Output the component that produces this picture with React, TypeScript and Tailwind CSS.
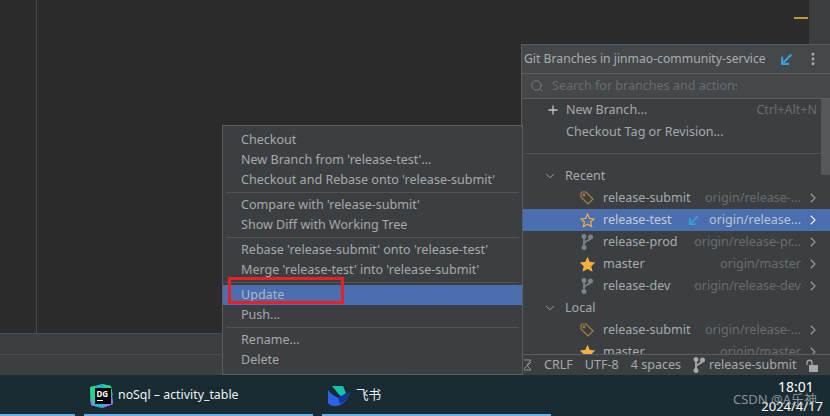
import { ChevronDown, ChevronRight, MoreVertical, Plus, Search } from 'lucide-react'

const font = "font-['Noto_Sans','Noto_Sans_CJK_SC',sans-serif]"

function TagIcon() {
    return (
        <svg width="14" height="14" viewBox="0 0 14 14" fill="none" stroke="#a9803e" strokeWidth="1.2">
            <path d="M1 2.5 Q1 1 2.5 1 H6 L13 8 L8 13 L1 6 Z" />
            <circle cx="4" cy="4" r="0.8" />
        </svg>
    )
}

function StarIcon({ filled }: { filled?: boolean }) {
    return (
        <svg width="15" height="15" viewBox="0 0 15 15" fill={filled ? '#f4af3d' : 'none'} stroke="#f4af3d" strokeWidth="1.2">
            <path d="M7.5 1.2 L9.4 5.4 L14 5.9 L10.6 9 L11.6 13.6 L7.5 11.2 L3.4 13.6 L4.4 9 L1 5.9 L5.6 5.4 Z" />
        </svg>
    )
}

function BranchIcon({ color = '#7d8487' }: { color?: string }) {
    return (
        <svg width="12" height="16" viewBox="0 0 12 16" fill="none" stroke={color} strokeWidth="1.8">
            <path d="M3 3 V13" />
            <path d="M9.5 3.5 C9.5 7 3 6.5 3 10" />
            <circle cx="3" cy="2.5" r="1.6" fill={color} />
            <circle cx="9.5" cy="3" r="1.6" fill={color} />
            <circle cx="3" cy="13.5" r="1.6" fill={color} />
        </svg>
    )
}

function InArrow({ size = 12 }: { size?: number }) {
    return (
        <svg width={size} height={size} viewBox="0 0 12 12" fill="none" stroke="#389fd6" strokeWidth="2">
            <path d="M10.5 1.5 L3 9" />
            <path d="M2 3.5 V10 H8.5" />
        </svg>
    )
}

function LockIcon() {
    return (
        <svg width="12" height="13" viewBox="0 0 12 13" fill="none">
            <rect x="3" y="6" width="9" height="7" fill="#a5a9ac" />
            <path d="M1 6 V3.5 C1 0.5 6 0.5 6 3.5 V6" stroke="#a5a9ac" strokeWidth="1.3" />
        </svg>
    )
}

function ClippedStatusIcon() {
    return (
        <svg width="8" height="14" viewBox="0 0 8 14" fill="none" stroke="#8f9396" strokeWidth="1">
            <path d="M0 2 H7 L3 7 L7 12 H0" />
            <path d="M0 11 L7 4" />
        </svg>
    )
}

function DataGripLogo() {
    return (
        <svg width="25" height="24" viewBox="0 0 25 24">
            <path d="M1 3 L13 0 L22 2 L24 20 L13 24 L2 21 Z" fill="#20b8c8" />
            <path d="M1 3 L7 2 L5 21 L2 21 Z" fill="#21d789" />
            <path d="M13 0 L22 2 L24 12 L17 4 Z" fill="#21d789" />
            <path d="M13 24 L24 20 L23 12 L16 20 Z" fill="#9775f8" />
            <path d="M1 13 L5 21 L12 24 L2 21 Z" fill="#9775f8" />
            <rect x="6" y="4" width="16" height="16" fill="#000" />
            <text x="7.5" y="12.5" fontSize="8" fontWeight="700" fill="#fff" fontFamily="Noto Sans">DG</text>
            <rect x="8" y="16" width="6" height="1" fill="#fff" />
        </svg>
    )
}

function FeishuLogo() {
    return (
        <svg width="22" height="20" viewBox="0 0 22 20">
            <path d="M4 0 H15 L18 7 L13 11 Z" fill="#12c4ab" />
            <path d="M0 4 C4 9 9 12 14 13 L22 6 C19 14 15 20 7 20 C3 20 1 18 0 17 Z" fill="#2c62e8" />
            <path d="M10 11 L22 6 C19 14 15 17 12 18 Z" fill="#14359b" />
        </svg>
    )
}

const Sep = () => <div className="h-[1px] bg-[#515355] mx-[3px] my-[2px]" />

function MenuItem({ label, active }: { label: string; active?: boolean }) {
    return (
        <div className={`h-[20px] leading-[20px] pl-[18px] ${active ? 'bg-[#4b6eaf] text-[#a9b7c6]' : 'text-[#a5a9ac]'}`}>
            {label}
        </div>
    )
}

function BranchRow({ icon, name, remote, active, incoming }: {
    icon: React.ReactNode
    name: string
    remote: string
    active?: boolean
    incoming?: boolean
}) {
    return (
        <div className={`h-[22px] flex items-center pl-[54px] pr-[9px] shrink-0 whitespace-nowrap ${active ? 'bg-[#4b6eaf]' : ''}`}>
            <div className="w-[22px] flex justify-center mr-[5px]">{icon}</div>
            <span className={active ? 'text-[#c3ccd6]' : 'text-[#a5a9ac]'}>{name}</span>
            {incoming && <span className="ml-[16px]"><InArrow size={11} /></span>}
            <span className={`ml-auto ${active ? 'text-[#b9c4d2]' : 'text-[#686c6f]'}`}>{remote}</span>
            <ChevronRight size={16} strokeWidth={1.6} className={`ml-[4px] ${active ? 'text-[#eef1f5]' : 'text-[#9a9da0]'}`} />
        </div>
    )
}

function GroupRow({ label }: { label: string }) {
    return (
        <div className="h-[22px] flex items-center pl-[21px] shrink-0 text-[#a5a9ac]">
            <ChevronDown size={14} strokeWidth={1.5} className="mr-[8px]" />
            {label}
        </div>
    )
}

export default function App() {
    return (
        <div className={`relative w-[830px] h-[416px] overflow-hidden flex flex-col bg-[#2b2b2b] text-[12.55px] ${font}`}>
            {/* editor */}
            <div className="h-[333px] flex shrink-0">
                <div className="w-[37px] border-r border-[#4a4c4e]" />
                <div className="flex-1 bg-[#2b2b2b]" />
                <div className="w-[21px] bg-[#3c3f41]" />
            </div>
            <div className="absolute left-[794px] top-[17px] w-[14px] h-[2px] bg-[#c4952a]" />
            {/* tool window bars */}
            <div className="h-[22px] bg-[#3c3f41] border-t border-[#4a4d4f] border-b shrink-0" />
            <div className="h-[20px] bg-[#3c3f41] shrink-0" />
            {/* taskbar */}
            <div className="flex-1 relative flex items-center bg-gradient-to-r from-[#1a2a33] to-[#1b2b33] text-white">
                <div className="ml-[89px] flex items-center gap-[4px] w-[233px]">
                    <DataGripLogo />
                    <span className="text-[12.35px] text-[#eef0f2]">noSql – activity_table</span>
                </div>
                <div className="ml-[6px] flex items-center gap-[6px]">
                    <FeishuLogo />
                    <span className="text-[#eef0f2]">飞书</span>
                </div>
                <div className="absolute left-0 right-0 bottom-0 h-[2px] flex">
                    <div className="w-[75px] bg-[#63b0e8]" />
                    <div className="ml-[9px] w-[229px] bg-[#63b0e8]" />
                    <div className="ml-[9px] w-[229px] bg-[#63b0e8]" />
                </div>
                <div className="absolute right-[4px] top-[3px] w-[60px] text-center text-[14px] leading-[18px]">18:01</div>
                <div className="absolute right-[7px] top-[22px] text-[13px] leading-[18px]">2024/4/17</div>
                <div className="absolute left-[733px] top-[15px] text-[13px] leading-[18px] text-[#a8adb0]/80">CSDN @A乐神</div>
            </div>

            {/* branches popup */}
            <div className="absolute left-[521px] top-[44px] w-[309px] h-[331px] flex flex-col bg-[#3c3f41] border-l border-t border-[#5b5d5f]">
                <div className="h-[29px] shrink-0 flex items-center pl-[2px] bg-[#45484a] border-b border-[#5b5d5f] text-[12.2px] text-[#a9adb0] whitespace-nowrap">
                    <span className="w-[241px]">Git Branches in jinmao-community-service</span>
                    <span className="ml-[15px]"><InArrow size={13} /></span>
                    <MoreVertical size={16} strokeWidth={2.4} className="ml-[12px] text-[#a9adb0]" />
                </div>
                <div className="h-[25px] shrink-0 flex items-center pl-[8px] bg-[#45484a] border-b border-[#5b5d5f] text-[#686c6f]">
                    <Search size={14} strokeWidth={1.5} className="text-[#7f8386]" />
                    <span className="ml-[8px] w-[185px] overflow-hidden whitespace-nowrap">Search for branches and actions</span>
                </div>
                <div className="relative flex-1 flex flex-col overflow-hidden">
                    <div className="absolute right-0 top-0 w-[9px] h-[76px] bg-[#55585a]" />
                    <div className="h-[22px] flex items-center pl-[24px] shrink-0 text-[#a5a9ac]">
                        <Plus size={14} strokeWidth={2.2} className="mr-[6px] text-[#c5c8ca]" />
                        New Branch...
                        <span className="ml-auto mr-[13px] text-[#686c6f]">Ctrl+Alt+N</span>
                    </div>
                    <div className="h-[22px] flex items-center pl-[44px] shrink-0 text-[#a5a9ac]">Checkout Tag or Revision...</div>
                    <div className="h-[1px] mt-[10px] mb-[11px] mx-[3px] bg-[#515355] shrink-0" />
                    <GroupRow label="Recent" />
                    <BranchRow icon={<TagIcon />} name="release-submit" remote="origin/release-..." />
                    <BranchRow icon={<StarIcon />} name="release-test" remote="origin/release..." active incoming />
                    <BranchRow icon={<BranchIcon />} name="release-prod" remote="origin/release-pr..." />
                    <BranchRow icon={<StarIcon filled />} name="master" remote="origin/master" />
                    <BranchRow icon={<BranchIcon />} name="release-dev" remote="origin/release-dev" />
                    <GroupRow label="Local" />
                    <BranchRow icon={<TagIcon />} name="release-submit" remote="origin/release-..." />
                    <BranchRow icon={<StarIcon filled />} name="master" remote="origin/master" />
                </div>
                <div className="h-[21px] shrink-0 flex items-center bg-[#3c3f41] border-t border-[#5b5d5f] text-[#a5a9ac] pl-[2px] gap-[12px] whitespace-nowrap">
                    <ClippedStatusIcon />
                    <span>CRLF</span>
                    <span>UTF-8</span>
                    <span>4 spaces</span>
                    <span className="flex items-center gap-[4px]"><BranchIcon color="#a5a9ac" />release-submit</span>
                    <span className="-ml-[3px]"><LockIcon /></span>
                </div>
            </div>

            {/* context menu, sits over the popup's left edge */}
            <div className="absolute left-[222px] top-[125px] w-[301px] h-[250px] bg-[#3c3f41] border border-[#5b5d5f] pt-[4px]">
                <MenuItem label="Checkout" />
                <MenuItem label="New Branch from 'release-test'..." />
                <MenuItem label="Checkout and Rebase onto 'release-submit'" />
                <Sep />
                <MenuItem label="Compare with 'release-submit'" />
                <MenuItem label="Show Diff with Working Tree" />
                <Sep />
                <MenuItem label="Rebase 'release-submit' onto 'release-test'" />
                <MenuItem label="Merge 'release-test' into 'release-submit'" />
                <Sep />
                <MenuItem label="Update" active />
                <MenuItem label="Push..." />
                <Sep />
                <MenuItem label="Rename..." />
                <MenuItem label="Delete" />
            </div>
            <div className="absolute left-[228px] top-[277px] w-[116px] h-[27px] border-[3px] border-[#e8202a]" />
        </div>
    )
}
